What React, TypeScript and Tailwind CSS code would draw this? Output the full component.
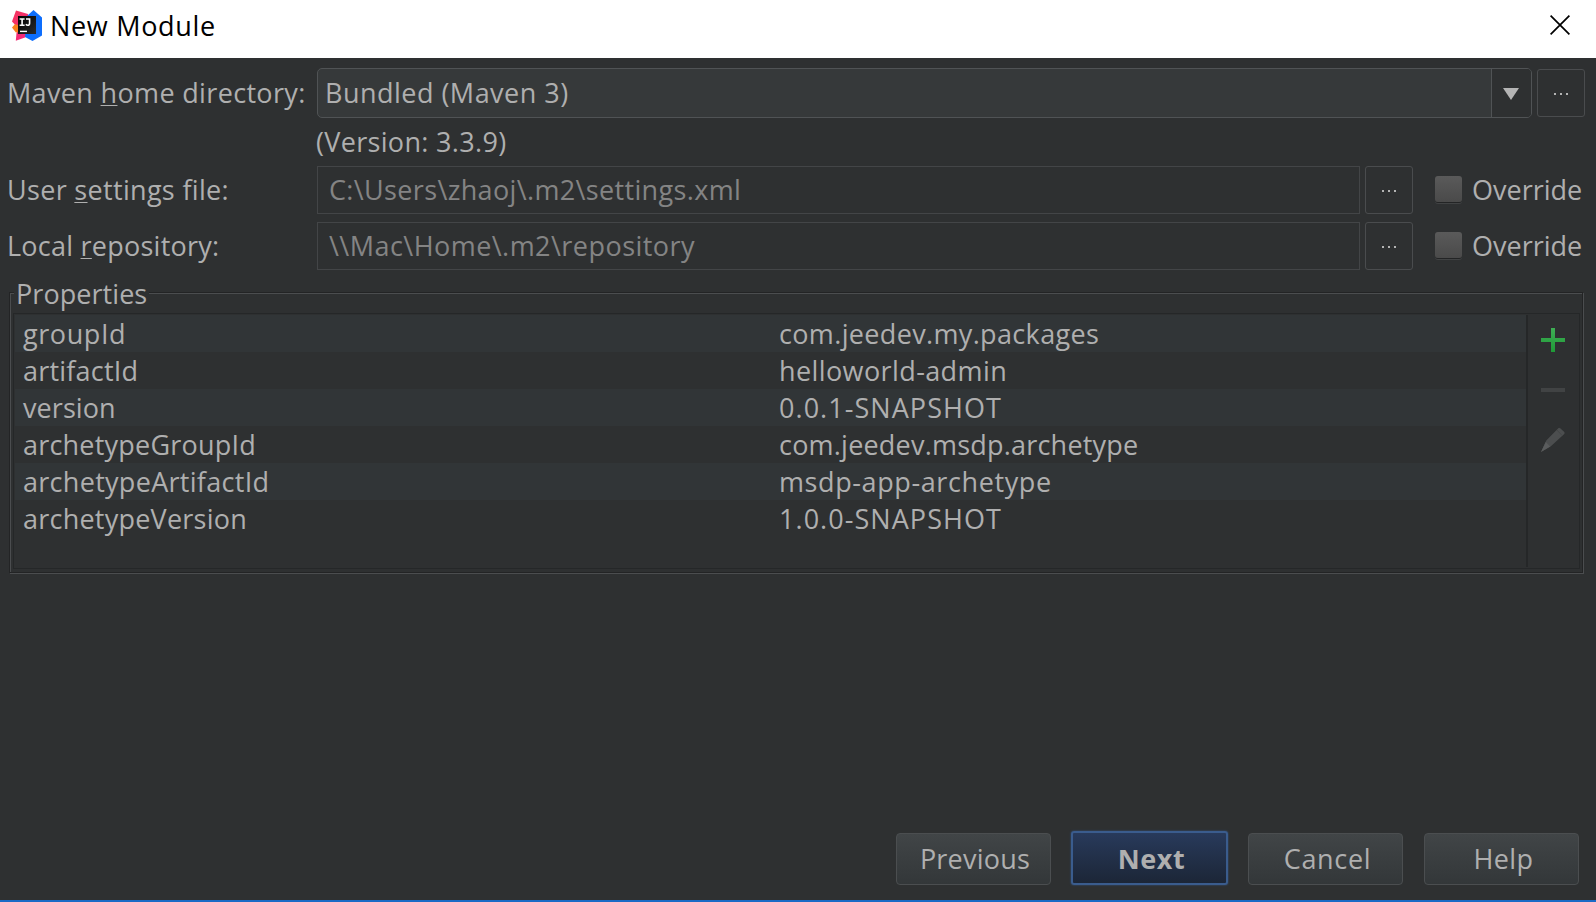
import React from "react";

const properties = [
  { name: "groupId", nameClass: "tracking-[0.574px]", value: "com.jeedev.my.packages", valueClass: "tracking-[0.346px]" },
  { name: "artifactId", nameClass: "tracking-[0.2px]", value: "helloworld-admin", valueClass: "tracking-[0.4px]" },
  { name: "version", nameClass: "tracking-[0.065px]", value: "0.0.1-SNAPSHOT", valueClass: "tracking-[1.05px]" },
  { name: "archetypeGroupId", nameClass: "tracking-[0.21px]", value: "com.jeedev.msdp.archetype", valueClass: "tracking-[0.21px]" },
  { name: "archetypeArtifactId", nameClass: "tracking-[0.29px]", value: "msdp-app-archetype", valueClass: "tracking-[0.6px]" },
  { name: "archetypeVersion", nameClass: "tracking-[0.23px]", value: "1.0.0-SNAPSHOT", valueClass: "tracking-[1.05px]" },
];

function AppLogo() {
  return (
    <svg className="mt-px h-8 w-8 shrink-0" viewBox="0 0 32 32">
      <defs>
        <linearGradient id="logo-pink" x1="0" y1="0" x2="0.6" y2="1">
          <stop offset="0" stopColor="#f4365c" />
          <stop offset="1" stopColor="#f5287b" />
        </linearGradient>
        <linearGradient id="logo-dark" x1="0" y1="0" x2="1" y2="1">
          <stop offset="0" stopColor="#000" />
          <stop offset="1" stopColor="#2b2b2b" />
        </linearGradient>
      </defs>
      <path d="M5 0.5L17 4V24L14 27.5L4.8 30.8L5.5 23L8 19L1 11.5Z" fill="url(#logo-pink)" />
      <path d="M1 17.5L4 14L9 16V22L4.8 22.6Z" fill="#fc801d" />
      <path d="M22.5 0L31 7.5V25.5L21.5 31L14 27L16 6Z" fill="#0d6efd" />
      <rect x="7" y="6" width="18" height="18" fill="url(#logo-dark)" />
      <path d="M8.6 9h5M11.1 9v6.2M8.6 15.2h5M15 9h3.6v4.2q0 2-1.8 2q-1.2 0-1.9-0.9" fill="none" stroke="#fff" strokeWidth="1.6" />
      <path d="M9 21.4h7" stroke="#fff" strokeWidth="1.4" />
    </svg>
  );
}

function TitleBar() {
  return (
    <header className="flex h-[58px] shrink-0 items-center bg-white pr-[26px] pb-[7px] pl-[11px] text-black">
      <AppLogo />
      <h1 className="ml-[7px] flex-1 leading-[37px] tracking-[0.684px]">New Module</h1>
      <svg className="mb-[2px] h-5 w-5" viewBox="0 0 20 20" stroke="#000" strokeWidth="1.7" fill="none">
        <path d="M0.6 0.6L19.4 19.4M19.4 0.6L0.6 19.4" />
      </svg>
    </header>
  );
}

function BrowseButton() {
  return (
    <button className="flex h-12 w-12 shrink-0 items-center justify-center gap-1 rounded-[3px] border border-[#4a4c4e] pt-px">
      <span className="h-0.5 w-0.5 bg-[#b4b4b4]" />
      <span className="h-0.5 w-0.5 bg-[#b4b4b4]" />
      <span className="h-0.5 w-0.5 bg-[#b4b4b4]" />
    </button>
  );
}

function Override() {
  return (
    <label className="ml-[22px] flex items-center">
      <span className="mb-[3px] h-[26px] w-[27px] rounded-[3px] bg-linear-to-b from-[#5a5a5a] to-[#4a4a4a] shadow-[0_1px_0_#232425,0_2px_0_#414344]" />
      <span className="-mt-0.5 ml-[10px] leading-[37px]">Override</span>
    </label>
  );
}

function PathRow({ label, path, pathClass }: { label: React.ReactNode; path: string; pathClass: string }) {
  return (
    <div className="flex h-12 items-center">
      <div className="-mt-0.5 w-[311px] shrink-0 pl-px leading-[37px]">{label}</div>
      <div className="flex h-12 w-[1043px] items-center border border-[#434547] pb-0.5 pl-[11px] text-[#848484]">
        <span className={pathClass}>{path}</span>
      </div>
      <div className="ml-[5px]">
        <BrowseButton />
      </div>
      <Override />
    </div>
  );
}

const mnemonic = "underline decoration-1 underline-offset-2 [text-decoration-skip-ink:none]";

function PropertiesPanel() {
  return (
    <section className="mt-[22px] ml-[3px] flex h-[281px] w-[1574px] flex-col border border-[#232425] pr-[3px] pb-[3px] pl-[3px] shadow-[1px_1px_0_#4b4d4f,inset_1px_1px_0_#4b4d4f]">
      <h2 className="-mt-[19px] ml-px h-[39px] w-[135px] shrink-0 bg-[#2e3031] pl-0.5 leading-[39px] tracking-[0.06px]">Properties</h2>
      <div className="-mr-px flex flex-1 border border-[#252728]">
        <div className="flex-1 pt-px pl-px">
          {properties.map((p, i) => (
            <div key={p.name} className={`flex h-[37px] leading-[37px] ${i % 2 === 0 ? "bg-[#313537]" : ""}`}>
              <span className={`w-[756px] shrink-0 pl-2 ${p.nameClass}`}>{p.name}</span>
              <span className={`pl-2 ${p.valueClass}`}>{p.value}</span>
            </div>
          ))}
        </div>
        <div className="my-px flex w-[53px] flex-col items-center border-l-2 border-[#252728] pr-px">
          <svg className="mt-[13px] h-6 w-6" viewBox="0 0 24 24">
            <defs>
              <linearGradient id="add" x1="0" y1="0" x2="0" y2="1">
                <stop offset="0" stopColor="#3fae55" />
                <stop offset="1" stopColor="#1f9a37" />
              </linearGradient>
            </defs>
            <path d="M10 0h4v10h10v4H14v10h-4V14H0v-4h10z" fill="url(#add)" />
          </svg>
          <span className="mt-[36px] h-1 w-6 bg-[#414344]" />
          <svg className="mt-[35px] h-[25px] w-6" viewBox="0 0 25 25" preserveAspectRatio="none">
            <path d="M0 25L5.5 13.5L18 1.2Q19 0.3 20 1.2L24.3 5Q25 6 24.2 7L10 19.5Z" fill="#4c4e4f" />
            <path d="M0 25L5 15L9.5 19.5Z" fill="#5a5c5d" />
            <path d="M16.5 3L22 8.5" stroke="#434546" strokeWidth="1" />
          </svg>
        </div>
      </div>
    </section>
  );
}

const footerButton = "flex h-[52px] w-[155px] items-center justify-center rounded-[4px] border border-[#4b4e50] bg-linear-to-b from-[#414547] to-[#333739] pb-px";

export default function App() {
  return (
    <div className="flex h-[902px] w-[1596px] flex-col overflow-hidden border-b-2 border-[#1a6ac6] bg-[#2e3031] font-['Open_Sans',sans-serif] text-[27px] leading-[37px] whitespace-pre text-[#afafaf]">
      <TitleBar />
      <main className="flex flex-1 flex-col pt-[10px] pl-[6px]">
        <div className="flex h-[50px] items-center">
          <div className="-mt-0.5 w-[311px] shrink-0 pl-px tracking-[0.34px]">
            Maven <span className={mnemonic}>h</span>ome directory:
          </div>
          <div className="flex h-[50px] w-[1215px] overflow-hidden rounded-[5px] border border-[#505355] bg-[#36393a]">
            <span className="flex-1 pt-[5px] pl-[7px] tracking-[0.48px]">Bundled (Maven 3)</span>
            <span className="flex w-[40px] items-center justify-center border-l border-[#505355] bg-[#2e3031] pt-px pr-px">
              <svg className="h-3 w-4" viewBox="0 0 16 12">
                <path d="M0 0h16L8 12z" fill="#b4b4b4" />
              </svg>
            </span>
          </div>
          <div className="ml-[5px]">
            <BrowseButton />
          </div>
        </div>
        <p className="mt-[5px] ml-[310px] h-[43px] tracking-[0.32px]">(Version: 3.3.9)</p>
        <div className="flex flex-col gap-2">
          <PathRow
            label={<span className="tracking-[0.315px]">User <span className={mnemonic}>s</span>ettings file:</span>}
            path={"C:\\Users\\zhaoj\\.m2\\settings.xml"}
            pathClass="tracking-[0.35px]"
          />
          <PathRow
            label={<span className="tracking-[0.239px]">Local <span className={mnemonic}>r</span>epository:</span>}
            path={"\\\\Mac\\Home\\.m2\\repository"}
            pathClass="tracking-[0.454px]"
          />
        </div>
        <PropertiesPanel />
        <footer className="mt-auto mr-[17px] mb-[14px] flex items-center justify-end">
          <button className={`${footerButton} mr-5`}>
            <span className="pl-[3px] tracking-[0.22px]">Previous</span>
          </button>
          <button className="-mt-px mr-5 mb-px flex h-[54px] w-[157px] items-center justify-center rounded-[3px] border-2 border-[#3a5c8d] bg-linear-to-b from-[#283a5b] to-[#1c2637] pt-px font-bold shadow-[0_0_2px_#365a8c]">
            <span className="pl-1 tracking-[0.55px]">Next</span>
          </button>
          <button className={`${footerButton} mr-[21px]`}>
            <span className="pl-1 tracking-[0.667px]">Cancel</span>
          </button>
          <button className={footerButton}>
            <span className="pl-1 tracking-[0.372px]">Help</span>
          </button>
        </footer>
      </main>
    </div>
  );
}
